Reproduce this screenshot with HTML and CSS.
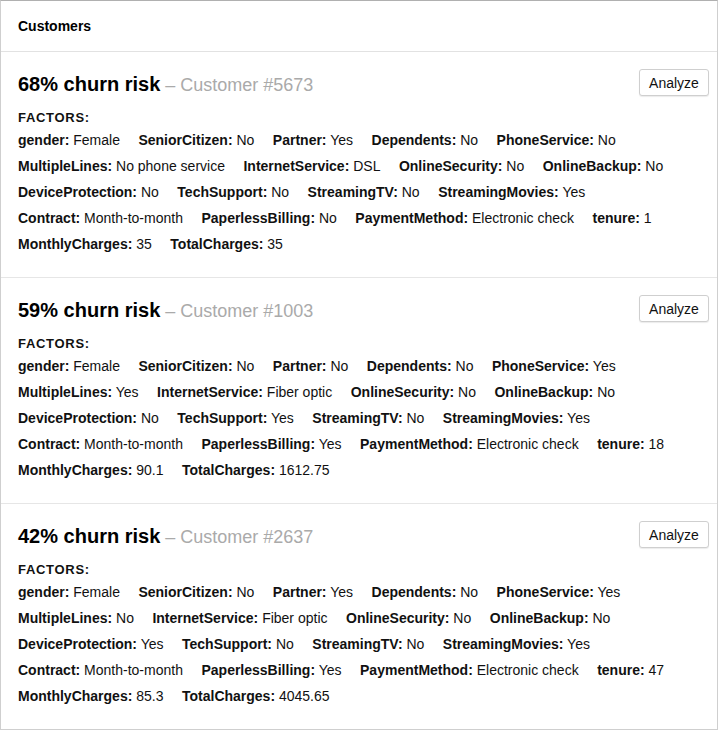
FILE: index.html
```html
<!DOCTYPE html>
<html>
<head>
<meta charset="utf-8">
<link rel="stylesheet" href="styles.css">
</head>
<body>
<div class="card">
  <div class="card-header">Customers</div>

  <div class="item">
    <div class="item-head">
      <div class="title"><span class="risk">68% churn risk</span><span class="cust"> – Customer #5673</span></div>
      <button class="btn">Analyze</button>
    </div>
    <div class="factors-label">FACTORS:</div>
    <div class="factors">
      <span class="f"><b>gender:</b> Female</span>
      <span class="f"><b>SeniorCitizen:</b> No</span>
      <span class="f"><b>Partner:</b> Yes</span>
      <span class="f"><b>Dependents:</b> No</span>
      <span class="f"><b>PhoneService:</b> No</span>
      <span class="f"><b>MultipleLines:</b> No phone service</span>
      <span class="f"><b>InternetService:</b> DSL</span>
      <span class="f"><b>OnlineSecurity:</b> No</span>
      <span class="f"><b>OnlineBackup:</b> No</span>
      <span class="f"><b>DeviceProtection:</b> No</span>
      <span class="f"><b>TechSupport:</b> No</span>
      <span class="f"><b>StreamingTV:</b> No</span>
      <span class="f"><b>StreamingMovies:</b> Yes</span>
      <span class="f"><b>Contract:</b> Month-to-month</span>
      <span class="f"><b>PaperlessBilling:</b> No</span>
      <span class="f"><b>PaymentMethod:</b> Electronic check</span>
      <span class="f"><b>tenure:</b> 1</span>
      <span class="f"><b>MonthlyCharges:</b> 35</span>
      <span class="f"><b>TotalCharges:</b> 35</span>
    </div>
  </div>

  <div class="item">
    <div class="item-head">
      <div class="title"><span class="risk">59% churn risk</span><span class="cust"> – Customer #1003</span></div>
      <button class="btn">Analyze</button>
    </div>
    <div class="factors-label">FACTORS:</div>
    <div class="factors">
      <span class="f"><b>gender:</b> Female</span>
      <span class="f"><b>SeniorCitizen:</b> No</span>
      <span class="f"><b>Partner:</b> No</span>
      <span class="f"><b>Dependents:</b> No</span>
      <span class="f"><b>PhoneService:</b> Yes</span>
      <span class="f"><b>MultipleLines:</b> Yes</span>
      <span class="f"><b>InternetService:</b> Fiber optic</span>
      <span class="f"><b>OnlineSecurity:</b> No</span>
      <span class="f"><b>OnlineBackup:</b> No</span>
      <span class="f"><b>DeviceProtection:</b> No</span>
      <span class="f"><b>TechSupport:</b> Yes</span>
      <span class="f"><b>StreamingTV:</b> No</span>
      <span class="f"><b>StreamingMovies:</b> Yes</span>
      <span class="f"><b>Contract:</b> Month-to-month</span>
      <span class="f"><b>PaperlessBilling:</b> Yes</span>
      <span class="f"><b>PaymentMethod:</b> Electronic check</span>
      <span class="f"><b>tenure:</b> 18</span>
      <span class="f"><b>MonthlyCharges:</b> 90.1</span>
      <span class="f"><b>TotalCharges:</b> 1612.75</span>
    </div>
  </div>

  <div class="item">
    <div class="item-head">
      <div class="title"><span class="risk">42% churn risk</span><span class="cust"> – Customer #2637</span></div>
      <button class="btn">Analyze</button>
    </div>
    <div class="factors-label">FACTORS:</div>
    <div class="factors">
      <span class="f"><b>gender:</b> Female</span>
      <span class="f"><b>SeniorCitizen:</b> No</span>
      <span class="f"><b>Partner:</b> Yes</span>
      <span class="f"><b>Dependents:</b> No</span>
      <span class="f"><b>PhoneService:</b> Yes</span>
      <span class="f"><b>MultipleLines:</b> No</span>
      <span class="f"><b>InternetService:</b> Fiber optic</span>
      <span class="f"><b>OnlineSecurity:</b> No</span>
      <span class="f"><b>OnlineBackup:</b> No</span>
      <span class="f"><b>DeviceProtection:</b> Yes</span>
      <span class="f"><b>TechSupport:</b> No</span>
      <span class="f"><b>StreamingTV:</b> No</span>
      <span class="f"><b>StreamingMovies:</b> Yes</span>
      <span class="f"><b>Contract:</b> Month-to-month</span>
      <span class="f"><b>PaperlessBilling:</b> Yes</span>
      <span class="f"><b>PaymentMethod:</b> Electronic check</span>
      <span class="f"><b>tenure:</b> 47</span>
      <span class="f"><b>MonthlyCharges:</b> 85.3</span>
      <span class="f"><b>TotalCharges:</b> 4045.65</span>
    </div>
  </div>
</div>
</body>
</html>
```

FILE: styles.css
```css
html, body {
  margin: 0;
  padding: 0;
  background: #fff;
}
body {
  font-family: "Liberation Sans", Arial, Helvetica, sans-serif;
  color: #111;
}
.card {
  width: 718px;
  box-sizing: border-box;
  border: 1px solid #cfcfcf;
  border-top-color: #b0b0b0;
  background: #fff;
}
.card-header {
  height: 50px;
  line-height: 50px;
  padding: 0 17px;
  font-size: 14px;
  font-weight: bold;
  color: #000;
  border-bottom: 1px solid #e2e2e2;
}
.item {
  padding: 17px 8px 20px 17px;
  border-bottom: 1px solid #e6e6e6;
}
.item:last-child {
  border-bottom: none;
}
.item-head {
  display: flex;
  justify-content: space-between;
  align-items: flex-start;
}
.title {
  line-height: 30px;
  height: 30px;
}
.risk {
  font-size: 20px;
  font-weight: bold;
  color: #000;
}
.cust {
  font-size: 18px;
  color: #aaa;
}
.btn {
  font-family: "Liberation Sans", Arial, Helvetica, sans-serif;
  font-size: 14px;
  color: #111;
  background: #fff;
  border: 1px solid #cfcfcf;
  border-radius: 3px;
  box-shadow: 0 1px 1px rgba(0,0,0,0.08);
  width: 70px;
  height: 27px;
  padding: 0;
  margin: 0;
}
.factors-label {
  margin-top: 9px;
  font-size: 13px;
  line-height: 19px;
  font-weight: bold;
  letter-spacing: 0.7px;
  color: #111;
}
.factors {
  display: flex;
  flex-wrap: wrap;
  column-gap: 18.5px;
  font-size: 14px;
  line-height: 26px;
}
.f b {
  color: #111;
}
```
